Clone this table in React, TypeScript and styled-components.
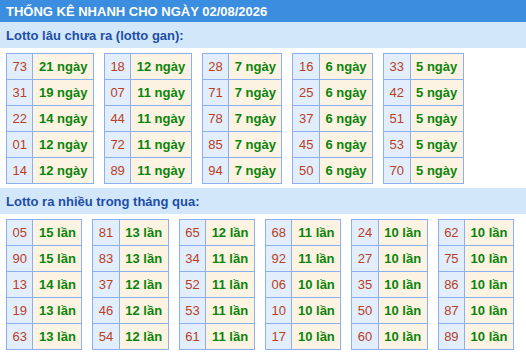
import styled, { createGlobalStyle } from 'styled-components';

/** Data */
const ganData: [string, string][][] = [
  [['73', '21 ngày'], ['31', '19 ngày'], ['22', '14 ngày'], ['01', '12 ngày'], ['14', '12 ngày']],
  [['18', '12 ngày'], ['07', '11 ngày'], ['44', '11 ngày'], ['72', '11 ngày'], ['89', '11 ngày']],
  [['28', '7 ngày'], ['71', '7 ngày'], ['78', '7 ngày'], ['85', '7 ngày'], ['94', '7 ngày']],
  [['16', '6 ngày'], ['25', '6 ngày'], ['37', '6 ngày'], ['45', '6 ngày'], ['50', '6 ngày']],
  [['33', '5 ngày'], ['42', '5 ngày'], ['51', '5 ngày'], ['53', '5 ngày'], ['70', '5 ngày']],
];

const hotData: [string, string][][] = [
  [['05', '15 lần'], ['90', '15 lần'], ['13', '14 lần'], ['19', '13 lần'], ['63', '13 lần']],
  [['81', '13 lần'], ['83', '13 lần'], ['37', '12 lần'], ['46', '12 lần'], ['54', '12 lần']],
  [['65', '12 lần'], ['34', '11 lần'], ['52', '11 lần'], ['53', '11 lần'], ['61', '11 lần']],
  [['68', '11 lần'], ['92', '11 lần'], ['06', '10 lần'], ['10', '10 lần'], ['17', '10 lần']],
  [['24', '10 lần'], ['27', '10 lần'], ['35', '10 lần'], ['50', '10 lần'], ['60', '10 lần']],
  [['62', '10 lần'], ['75', '10 lần'], ['86', '10 lần'], ['87', '10 lần'], ['89', '10 lần']],
];

const GlobalStyle = createGlobalStyle`
  body {
    margin: 0;
    background: #fff;
    font-family: "Liberation Sans", Arial, sans-serif;
  }
`;

const Header = styled.div`
  height: 22px;
  background: #3a8ddf;
  color: #fff;
  font-size: 13px;
  font-weight: bold;
  display: flex;
  align-items: center;
  padding: 0 6px;
`;

const SubHeader = styled.div`
  height: 26px;
  background: #d3e7fb;
  color: #1d4ea6;
  font-size: 13px;
  font-weight: bold;
  display: flex;
  align-items: center;
  padding: 0 6px;
`;

const Section = styled.div`
  display: flex;
  gap: 10px;
  padding: 5px 6px 4px;
`;

const Table = styled.table`
  border-collapse: collapse;
  font-size: 13px;

  td {
    border: 1px solid #8cb0ef;
    height: 25px;
    padding: 0 5.5px;
    text-align: center;
    white-space: nowrap;
  }
`;

const NumCell = styled.td`
  background: #e3eefc;
  color: #b8401f;
  min-width: 14px;
`;

const ValCell = styled.td`
  background: #fdf3e2;
  color: #0c840c;
  font-weight: bold;
`;

const StatTable = ({ rows }: { rows: [string, string][] }) => (
  <Table>
    <tbody>
      {rows.map(([num, val]) => (
        <tr key={num}>
          <NumCell>{num}</NumCell>
          <ValCell>{val}</ValCell>
        </tr>
      ))}
    </tbody>
  </Table>
);

const App = () => {
  return (
    <>
      <GlobalStyle />
      <Header>THỐNG KÊ NHANH CHO NGÀY 02/08/2026</Header>
      <SubHeader>Lotto lâu chưa ra (lotto gan):</SubHeader>
      <Section>
        {ganData.map((rows, i) => (
          <StatTable key={i} rows={rows} />
        ))}
      </Section>
      <SubHeader>Lotto ra nhiều trong tháng qua:</SubHeader>
      <Section>
        {hotData.map((rows, i) => (
          <StatTable key={i} rows={rows} />
        ))}
      </Section>
    </>
  );
};

export default App;
